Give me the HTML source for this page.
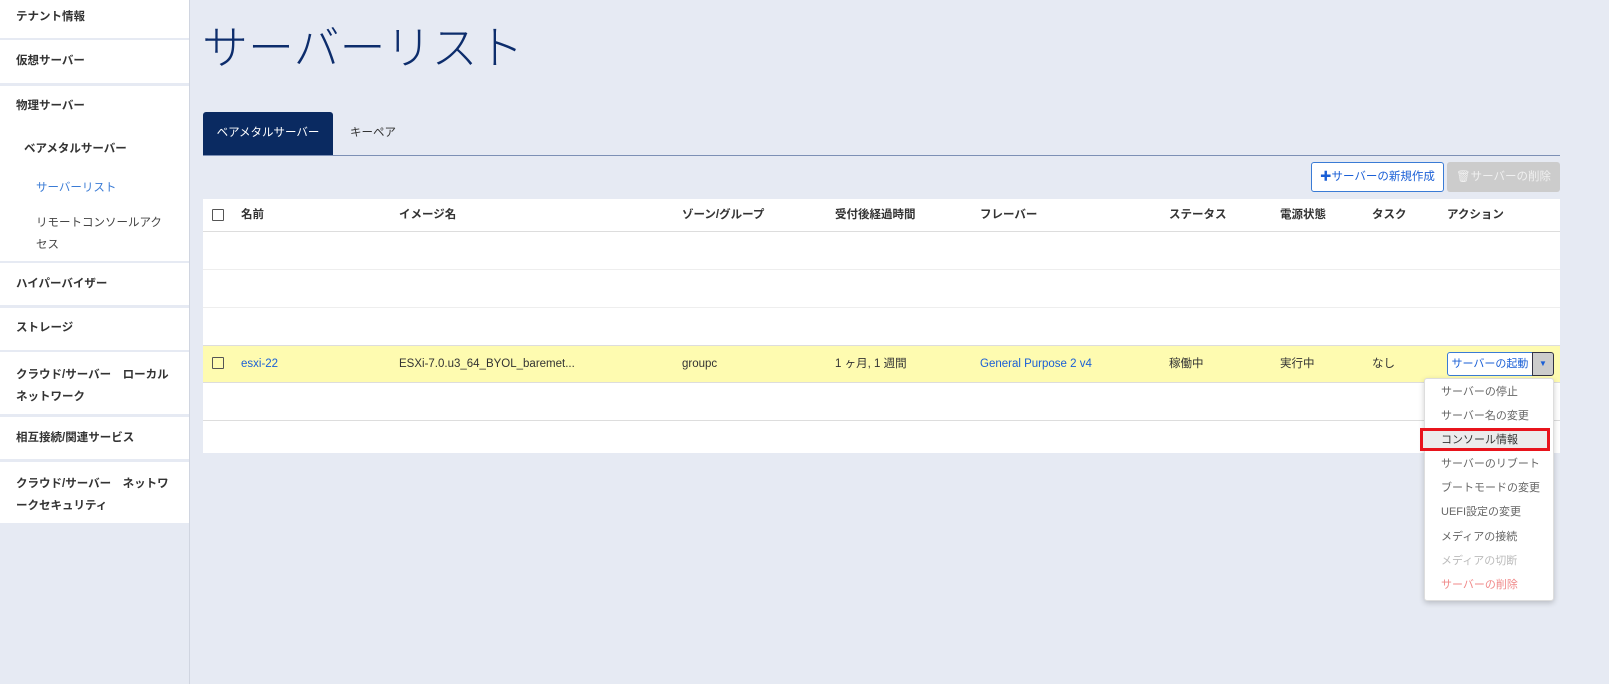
<!DOCTYPE html>
<html><head><meta charset="utf-8"><style>
*{box-sizing:border-box;margin:0;padding:0}
body{width:1609px;height:684px;background:#e6eaf3;font-family:"Liberation Sans","Noto Sans CJK JP",sans-serif;position:relative;overflow:hidden;font-size:11.5px;color:#333;line-height:14px}
.a{position:absolute;white-space:nowrap}
#side{position:absolute;left:0;top:0;width:190px;height:684px;border-right:1px solid #d0d5e0}
.sb{position:absolute;left:0;width:189px;background:#fff}
.sl{font-weight:bold;color:#333}
.bl{color:#1a5fd6}
</style></head><body>
<div id="side">
<div class="sb" style="top:0;height:38px"></div>
<div class="sb" style="top:40px;height:43px"></div>
<div class="sb" style="top:86px;height:175px"></div>
<div class="sb" style="top:263px;height:42px"></div>
<div class="sb" style="top:308px;height:42px"></div>
<div class="sb" style="top:352px;height:62px"></div>
<div class="sb" style="top:417px;height:42px"></div>
<div class="sb" style="top:462px;height:61px"></div>
<div class="a sl" style="left:16px;top:10px">テナント情報</div>
<div class="a sl" style="left:16px;top:54px">仮想サーバー</div>
<div class="a sl" style="left:16px;top:99px">物理サーバー</div>
<div class="a sl" style="left:24px;top:142px">ベアメタルサーバー</div>
<div class="a" style="left:36px;top:181px;color:#3a7bd5">サーバーリスト</div>
<div class="a" style="left:36px;top:212px;color:#444;white-space:normal;width:135px;line-height:22px">リモートコンソールアクセス</div>
<div class="a sl" style="left:16px;top:277px">ハイパーバイザー</div>
<div class="a sl" style="left:16px;top:364px;white-space:normal;width:160px;line-height:22px">クラウド/サーバー　ローカルネットワーク</div>
<div class="a sl" style="left:16px;top:321px">ストレージ</div>
<div class="a sl" style="left:16px;top:431px">相互接続/関連サービス</div>
<div class="a sl" style="left:16px;top:473px;white-space:normal;width:160px;line-height:22px">クラウド/サーバー　ネットワークセキュリティ</div>
</div>

<div class="a" style="left:202px;top:18px;font-size:46px;color:#0d2d6c;line-height:60px;font-weight:300">サーバーリスト</div>
<div class="a" style="left:203px;top:112px;width:130px;height:43px;background:#0a2a61;border-radius:3px 3px 0 0;color:#fff;text-align:center;line-height:43px">ベアメタルサーバー</div>
<div class="a" style="left:350px;top:112px;line-height:43px;color:#333">キーペア</div>
<div class="a" style="left:203px;top:155px;width:1357px;height:1px;background:#7d90b5"></div>

<div class="a" style="left:1311px;top:162px;width:133px;height:30px;border:1px solid #3a7bd5;border-radius:3px;background:#fff;color:#1a5fd6;text-align:center;line-height:28px"><b>✚</b>サーバーの新規作成</div>
<div class="a" style="left:1447px;top:162px;width:113px;height:30px;border-radius:3px;background:#ccc;color:#f0f0f0;text-align:center;line-height:30px">🗑サーバーの削除</div>

<div class="a" style="left:203px;top:199px;width:1357px;height:254px;background:#fff"></div>
<div class="a" style="left:203px;top:231px;width:1357px;height:1px;background:#ddd"></div>
<div class="a" style="left:203px;top:269px;width:1357px;height:1px;background:#eee"></div>
<div class="a" style="left:203px;top:307px;width:1357px;height:1px;background:#eee"></div>
<div class="a" style="left:203px;top:345px;width:1357px;height:38px;background:#fefbb0;border-top:1px solid #ddd;border-bottom:1px solid #ddd"></div>
<div class="a" style="left:203px;top:420px;width:1357px;height:1px;background:#ddd"></div>

<div class="a" style="left:212px;top:209px;width:12px;height:12px;border:1.5px solid #555;border-radius:1px"></div>
<div style="font-weight:bold;color:#333">
<div class="a" style="left:241px;top:208px">名前</div>
<div class="a" style="left:399px;top:208px">イメージ名</div>
<div class="a" style="left:682px;top:208px">ゾーン/グループ</div>
<div class="a" style="left:835px;top:208px">受付後経過時間</div>
<div class="a" style="left:980px;top:208px">フレーバー</div>
<div class="a" style="left:1169px;top:208px">ステータス</div>
<div class="a" style="left:1280px;top:208px">電源状態</div>
<div class="a" style="left:1372px;top:208px">タスク</div>
<div class="a" style="left:1447px;top:208px">アクション</div>
</div>

<div class="a" style="left:212px;top:357px;width:12px;height:12px;border:1.5px solid #555;border-radius:1px"></div>
<div class="a bl" style="left:241px;top:357px">esxi-22</div>
<div class="a" style="left:399px;top:357px">ESXi-7.0.u3_64_BYOL_baremet...</div>
<div class="a" style="left:682px;top:357px">groupc</div>
<div class="a" style="left:835px;top:357px">1 ヶ月, 1 週間</div>
<div class="a bl" style="left:980px;top:357px">General Purpose 2 v4</div>
<div class="a" style="left:1169px;top:357px">稼働中</div>
<div class="a" style="left:1280px;top:357px">実行中</div>
<div class="a" style="left:1372px;top:357px">なし</div>
<div class="a" style="left:1447px;top:352px;width:86px;height:24px;border:1px solid #3a7bd5;border-radius:3px 0 0 3px;background:#fff;color:#1a5fd6;text-align:center;line-height:22px;font-size:11px">サーバーの起動</div>
<div class="a" style="left:1532px;top:352px;width:22px;height:24px;border:1px solid #334;border-radius:0 3px 3px 0;background:#ccc;color:#1a5fd6;text-align:center;line-height:22px;font-size:8px">▼</div>

<div class="a" style="left:1424px;top:378px;width:130px;height:223px;background:#fff;border:1px solid #ddd;border-radius:3px;box-shadow:0 2px 6px rgba(0,0,0,.2)"></div>
<div class="a" style="left:1420px;top:428px;width:130px;height:23px;border:3px solid #e8141c;background:#ececec"></div>
<div style="color:#666;font-size:11px">
<div class="a" style="left:1441px;top:385px">サーバーの停止</div>
<div class="a" style="left:1441px;top:409px">サーバー名の変更</div>
<div class="a" style="left:1441px;top:433px;color:#333">コンソール情報</div>
<div class="a" style="left:1441px;top:457px">サーバーのリブート</div>
<div class="a" style="left:1441px;top:481px">ブートモードの変更</div>
<div class="a" style="left:1441px;top:505px">UEFI設定の変更</div>
<div class="a" style="left:1441px;top:530px">メディアの接続</div>
<div class="a" style="left:1441px;top:554px;color:#bbb">メディアの切断</div>
<div class="a" style="left:1441px;top:578px;color:#f08a8a">サーバーの削除</div>
</div>
</body></html>
